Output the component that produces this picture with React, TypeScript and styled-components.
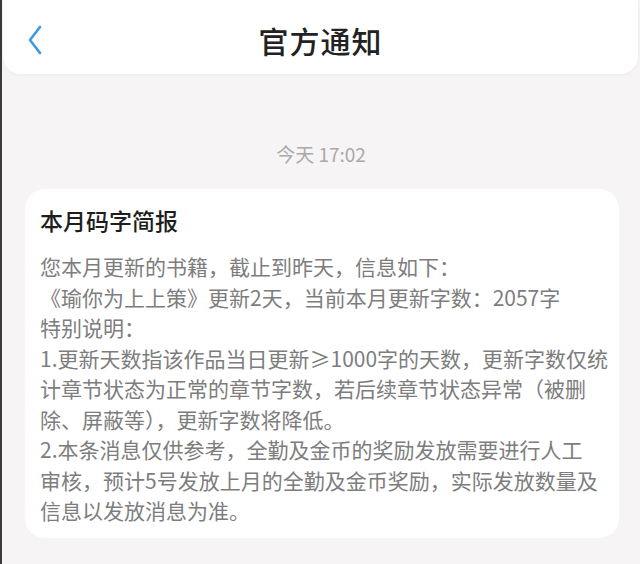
import styled, { createGlobalStyle } from "styled-components";

const GlobalStyle = createGlobalStyle`
  html, body {
    margin: 0;
    padding: 0;
    background: #f7f4f5;
  }
  body {
    font-family: "Noto Sans CJK SC", "Noto Sans", sans-serif;
  }
`;

const Page = styled.div`
  min-height: 564px;
  box-sizing: border-box;
  border-left: 2px solid #3b3b3b;
  background: #f7f4f5;
  display: flex;
  flex-direction: column;
`;

const Header = styled.header`
  height: 74px;
  box-sizing: border-box;
  padding-top: 6px;
  margin: 0 2px 0 1px;
  background: #fff;
  border-radius: 0 0 18px 18px;
  box-shadow: 0 1px 4px rgba(0, 0, 0, 0.04);
  display: grid;
  grid-template-columns: 60px 1fr 60px;
  align-items: center;
`;

const BackButton = styled.button`
  border: none;
  background: none;
  padding: 0 0 0 24px;
  height: 40px;
  display: flex;
  align-items: center;
  cursor: pointer;
`;

const Title = styled.h1`
  margin: 0;
  text-align: center;
  font-size: 30px;
  font-weight: 500;
  color: #222;
  letter-spacing: 1px;
`;

const Time = styled.div`
  margin-top: 67px;
  text-align: center;
  font-size: 19px;
  color: #a9a9a9;
  line-height: 26px;
`;

const Card = styled.section`
  margin: 22px 21px 0 23px;
  background: #fff;
  border-radius: 20px;
  padding: 14px 15px 12px;
`;

const CardTitle = styled.h2`
  margin: 0 0 14px;
  font-size: 23px;
  line-height: 34px;
  font-weight: 500;
  color: #1e1e1e;
`;

const Body = styled.div`
  font-size: 21px;
  line-height: 30.5px;
  color: #7d7d7d;
`;

const Line = styled.div`
  white-space: nowrap;
`;

const lines = [
  "您本月更新的书籍，截止到昨天，信息如下：",
  "《瑜你为上上策》更新2天，当前本月更新字数：2057字",
  "特别说明：",
  "1.更新天数指该作品当日更新≥1000字的天数，更新字数仅统",
  "计章节状态为正常的章节字数，若后续章节状态异常（被删",
  "除、屏蔽等），更新字数将降低。",
  "2.本条消息仅供参考，全勤及金币的奖励发放需要进行人工",
  "审核，预计5号发放上月的全勤及金币奖励，实际发放数量及",
  "信息以发放消息为准。",
];

function App() {
  return (
    <Page>
      <GlobalStyle />
      <Header>
        <BackButton aria-label="返回">
          <svg width="16" height="30" viewBox="0 0 16 30">
            <path
              d="M13 2 L3 15 L13 28"
              fill="none"
              stroke="#3a9be0"
              strokeWidth="2.6"
              strokeLinecap="round"
              strokeLinejoin="round"
            />
          </svg>
        </BackButton>
        <Title>官方通知</Title>
        <div />
      </Header>
      <Time>今天 17:02</Time>
      <Card>
        <CardTitle>本月码字简报</CardTitle>
        <Body>
          {lines.map((l) => (
            <Line key={l}>{l}</Line>
          ))}
        </Body>
      </Card>
    </Page>
  );
}

export default App;
